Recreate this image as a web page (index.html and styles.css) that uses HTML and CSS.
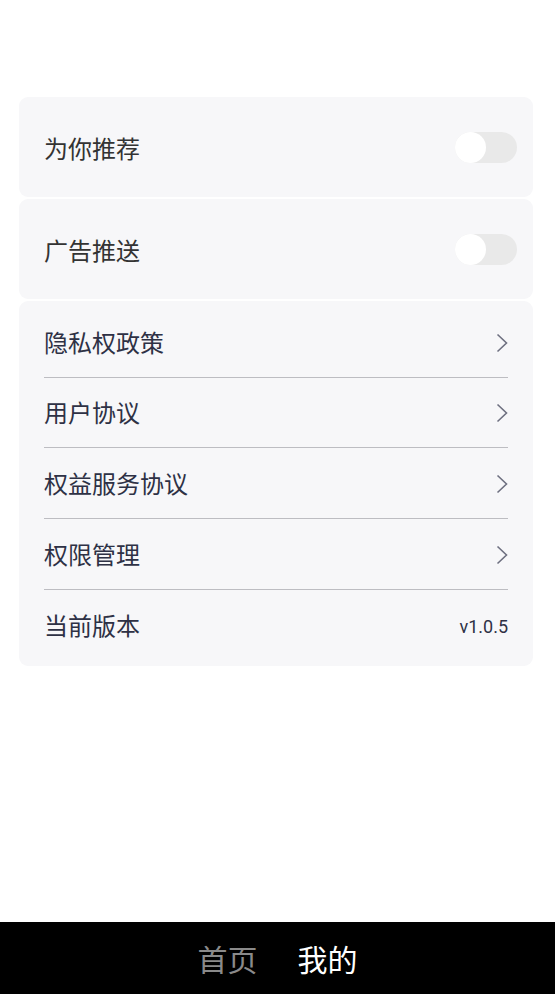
FILE: index.html
```html
<!DOCTYPE html>
<html lang="zh">
<head>
<meta charset="utf-8">
<link rel="stylesheet" href="styles.css">
</head>
<body>
<div class="page">
  <main class="content">
    <section class="card toggle-card">
      <span class="label">为你推荐</span>
      <span class="switch"><span class="knob"></span></span>
    </section>
    <section class="card toggle-card">
      <span class="label">广告推送</span>
      <span class="switch"><span class="knob"></span></span>
    </section>
    <section class="card list-card">
      <div class="row"><span class="item">隐私权政策</span><svg class="chev" viewBox="0 0 12 20"><path d="M1.5 1.5 L10.5 10 L1.5 18.5" /></svg></div>
      <div class="row"><span class="item">用户协议</span><svg class="chev" viewBox="0 0 12 20"><path d="M1.5 1.5 L10.5 10 L1.5 18.5" /></svg></div>
      <div class="row"><span class="item">权益服务协议</span><svg class="chev" viewBox="0 0 12 20"><path d="M1.5 1.5 L10.5 10 L1.5 18.5" /></svg></div>
      <div class="row"><span class="item">权限管理</span><svg class="chev" viewBox="0 0 12 20"><path d="M1.5 1.5 L10.5 10 L1.5 18.5" /></svg></div>
      <div class="row last"><span class="item">当前版本</span><span class="version">v1.0.5</span></div>
    </section>
  </main>
  <nav class="tabbar">
    <span class="tab">首页</span>
    <span class="tab active">我的</span>
  </nav>
</div>
</body>
</html>
```
FILE: styles.css
```css
* { box-sizing: border-box; }
html, body {
  margin: 0;
  padding: 0;
  background: #ffffff;
  font-family: "Noto Sans CJK SC", "Noto Sans", sans-serif;
}
.page {
  width: 555px;
  height: 994px;
  display: flex;
  flex-direction: column;
}
.content {
  flex: 1;
  padding: 97px 22px 0 19px;
  display: flex;
  flex-direction: column;
  gap: 2px;
}
.card {
  background: #f7f7f9;
  border-radius: 9px;
}
.toggle-card {
  height: 100px;
  display: flex;
  align-items: center;
  justify-content: space-between;
  padding: 0 16px 0 25px;
}
.label {
  font-size: 24px;
  color: #333333;
  line-height: 1;
  margin-top: 2px;
}
.switch {
  width: 62px;
  height: 31px;
  border-radius: 16px;
  background: #e9e9e9;
  display: flex;
  align-items: center;
}
.knob {
  width: 31px;
  height: 31px;
  border-radius: 50%;
  background: #ffffff;
}
.list-card {
  padding: 6px 25px 6px 25px;
}
.row {
  height: 70.67px;
  border-bottom: 1px solid #bdbdc2;
  display: flex;
  align-items: center;
  justify-content: space-between;
}
.row.last { border-bottom: none; }
.item {
  font-size: 24px;
  color: #2e3145;
  line-height: 1;
}
.chev {
  width: 12px;
  height: 20px;
  margin-top: 2px;
  fill: none;
  stroke: #6e7080;
  stroke-width: 1.6;
}
.version {
  font-family: Roboto, "Noto Sans", sans-serif;
  font-size: 18px;
  color: #2e3145;
  margin-top: 4px;
}
.tabbar {
  height: 72px;
  background: #000000;
  display: flex;
  justify-content: center;
  align-items: center;
  gap: 40px;
}
.tab {
  font-size: 30px;
  color: #8a8a8a;
  line-height: 1;
}
.tab.active { color: #ffffff; }
```
